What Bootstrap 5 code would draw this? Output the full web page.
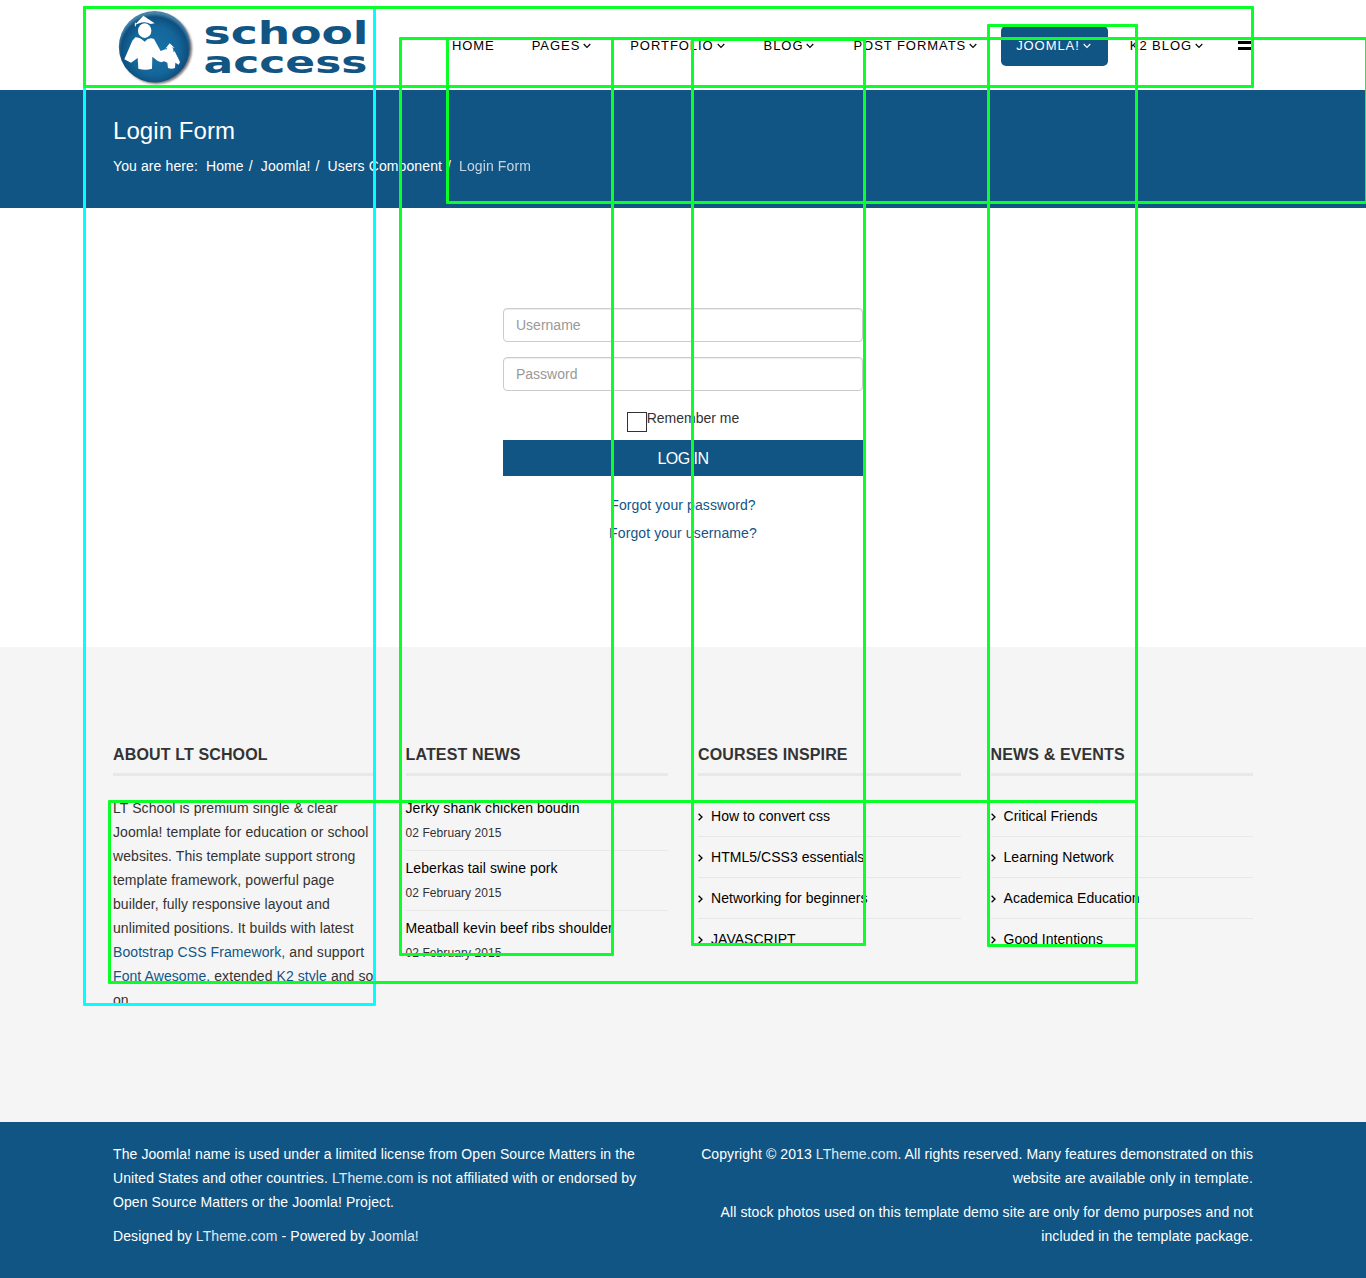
<!DOCTYPE html>
<html lang="en">
<head>
<meta charset="utf-8">
<meta name="viewport" content="width=device-width, initial-scale=1">
<title>Login Form</title>
<link href="https://cdn.jsdelivr.net/npm/bootstrap@5.3.0/dist/css/bootstrap.min.css" rel="stylesheet">
<style>
:root{--brand:#115585}
body{font:14px/24px "Liberation Sans",Arial,sans-serif;color:#333;background:#fff;overflow-x:hidden;position:relative}
a{text-decoration:none;color:var(--brand)}
.page-wrap{width:1170px;max-width:100%;margin:0 auto;padding:0 15px}
.site-head{height:90px}
.logo-svg{display:block;width:262px;height:90px}
.main-menu{gap:7px;margin-top:26px}
.main-menu .nav-link{font-size:13px;letter-spacing:.94px;line-height:40px;height:40px;padding:0 15px;color:#000;border-radius:5px;white-space:nowrap}
.main-menu .nav-link.active{background:var(--brand);color:#fff}
.main-menu svg{width:8px;height:6px;margin:0 2px 0 3px;vertical-align:1px;fill:none;stroke:currentColor;stroke-width:1.1}
.burger{width:14px;height:9px;margin:41px 1px 0 18px;border-top:3px solid #000;border-bottom:3px solid #000}
.title-band{height:118px;background:var(--brand);color:#fff}
.title-band h2{font-size:24px;line-height:26px;letter-spacing:.08px;margin:0;padding-top:28px;font-weight:400}
.crumbs{margin-top:10px;letter-spacing:.11px}
.crumbs a{color:#fff}
.sep{margin:0 8px 0 5px}
.login-area{height:439px;padding-top:100px}
.login-box{width:360px;margin:0 auto}
.login-box .form-control{height:34px;padding:6px 12px;font-size:14px;line-height:20px;border:1px solid #ccc;border-radius:4px;box-shadow:inset 0 1px 1px rgba(0,0,0,.075);margin-bottom:15px}
.login-box .form-control::placeholder{color:#999}
.tick{width:20px;height:20px;border:1px solid #333;margin-top:6px}
.btn-login{background:var(--brand);color:#fff;border:0;border-radius:0;height:36px;font-size:16px;line-height:24px;letter-spacing:-.5px;padding:7px 6px 5px;margin-top:8px}
.links{padding-top:15px;line-height:28px;letter-spacing:.11px}
.links a{display:block}
.bottom-area{background:#f5f5f5;height:475px;padding-top:94px;letter-spacing:.08px}
.bottom-area h3{font-size:16px;line-height:26px;font-weight:700;letter-spacing:.14px;margin:0 0 20px;padding:1px 0 5px;border-bottom:3px solid #e8e8e8;white-space:nowrap}
.cols{display:grid;grid-template-columns:repeat(4,minmax(0,1fr));column-gap:30px}
.news-item{height:60px;border-bottom:1px solid #e8e8e8;padding-top:5px}
.news-item:first-of-type{height:55px;padding-top:0}
.news-item:last-child{border:0}
.news-item a,.arrow-list a{color:#000}
.news-item span{font-size:12px;display:block;line-height:26px}
.arrow-list{list-style:none;margin:0;padding:0}
.arrow-list li{height:41px;line-height:40px;letter-spacing:.04px;border-bottom:1px solid #e8e8e8}
.arrow-list li:last-child{border:0}
.arrow-list svg{width:5px;height:8px;margin-right:8px;fill:none;stroke:#000;stroke-width:1.3;vertical-align:0}
.site-foot{background:var(--brand);color:#fff;height:156px;padding-top:20px;letter-spacing:.095px}
.site-foot p{margin:0 0 10px}
.site-foot a{color:#e0e9f0}
.region{position:absolute;border:3px solid #0aff28;border-radius:1px;pointer-events:none}
.r-cyan{left:83px;top:6px;width:293px;height:1000px;border-color:#0ff}
.r-head{left:83px;top:6px;width:1171px;height:82px}
.r-two{left:399px;top:37px;width:215px;height:919px}
.r-band{left:446px;top:37px;width:922px;height:167px}
.r-three{left:691px;top:38px;width:175px;height:908px}
.r-four{left:987px;top:24px;width:151px;height:923px}
.r-low{left:108px;top:800px;width:1030px;height:184px}
</style>
<script src="https://cdn.jsdelivr.net/npm/bootstrap@5.3.0/dist/js/bootstrap.bundle.min.js"></script>
</head>
<body>
<svg class="d-none"><symbol id="down" viewBox="0 0 8 6"><path d="M.7 1 4 4.4 7.3 1"/></symbol><symbol id="next" viewBox="0 0 5 8"><path d="M.6.7 4 4 .6 7.3"/></symbol></svg>
<header class="site-head">
<div class="page-wrap d-flex justify-content-between">
<a href="#" aria-label="school access"><svg class="logo-svg" viewBox="113 0 262 90">
<defs><radialGradient id="orb" cx=".5" cy=".55" r=".52"><stop offset="0" stop-color="#1773a6"/><stop offset=".65" stop-color="#14669a"/><stop offset=".9" stop-color="#0e4f7f"/><stop offset="1" stop-color="#4683a9"/></radialGradient><filter id="soft"><feGaussianBlur stdDeviation="1.2"/></filter></defs>
<circle cx="156.5" cy="48.5" r="35.5" fill="#4b4145" opacity=".75" filter="url(#soft)"/>
<circle cx="154.5" cy="46.8" r="35.7" fill="url(#orb)"/>
<g transform="translate(80 0) scale(.33333)" fill="#fff">
<path d="M190 47 224 70 212 72Q194 62 178 70L164 75Z"/><path d="M166 68v11" stroke="#fff" stroke-width="3"/>
<ellipse cx="194" cy="92" rx="20" ry="22"/>
<path d="M166 112Q180 112 194 125Q208 110 222 117L242 153 258 147 270 158 284 154 300 186 296 194 286 188 285 204Q275 208 264 204L262 188 252 184 244 187 233 183 217 170 216 206Q196 212 175 206L173 174 153 188 133 178 157 122Z"/>
<path d="M269 130 284 144 270 140 256 146Z"/><ellipse cx="270" cy="151" rx="10" ry="11"/>
</g>
<g font-family="DejaVu Sans" font-weight="700" fill="#115585"><text transform="translate(203.5 43.8)" font-size="32" textLength="165" lengthAdjust="spacingAndGlyphs">school</text><text transform="translate(203.5 72.5)" font-size="31" textLength="164" lengthAdjust="spacingAndGlyphs">access</text></g>
</svg></a>
<div class="d-flex">
<nav class="nav main-menu flex-nowrap">
<a class="nav-link" href="#">HOME</a>
<a class="nav-link" href="#">PAGES<svg><use href="#down"/></svg></a>
<a class="nav-link" href="#">PORTFOLIO<svg><use href="#down"/></svg></a>
<a class="nav-link" href="#">BLOG<svg><use href="#down"/></svg></a>
<a class="nav-link" href="#">POST FORMATS<svg><use href="#down"/></svg></a>
<a class="nav-link active" href="#">JOOMLA!<svg><use href="#down"/></svg></a>
<a class="nav-link" href="#">K2 BLOG<svg><use href="#down"/></svg></a>
</nav>
<div class="burger"></div>
</div>
</div>
</header>
<section class="title-band"><div class="page-wrap">
<h2>Login Form</h2>
<div class="crumbs d-flex"><span class="me-2">You are here:</span><a href="#">Home</a><span class="sep">/</span><a href="#">Joomla!</a><span class="sep">/</span><a href="#">Users Component</a><span class="sep">/</span><span class="opacity-75">Login Form</span></div>
</div></section>
<main class="login-area">
<form class="login-box">
<input class="form-control" type="text" placeholder="Username">
<input class="form-control" type="password" placeholder="Password">
<div class="d-flex justify-content-center"><span class="tick"></span><span>Remember me</span></div>
<button class="btn btn-login w-100 d-block" type="button">LOG IN</button>
<div class="text-center links"><a href="#">Forgot your password?</a><a href="#">Forgot your username?</a></div>
</form>
</main>
<section class="bottom-area"><div class="page-wrap cols">
<div><h3>ABOUT LT SCHOOL</h3>
<div>LT School is premium single &amp; clear<br>Joomla! template for education or school<br>websites. This template support strong<br>template framework, powerful page<br>builder, fully responsive layout and<br>unlimited positions. It builds with latest<br><a href="#">Bootstrap CSS Framework,</a> and support<br><span class="text-nowrap"><a href="#">Font Awesome,</a> extended <a href="#">K2 style</a> and so</span><br>on.</div></div>
<div><h3>LATEST NEWS</h3>
<div class="news-item"><a href="#">Jerky shank chicken boudin</a><span>02 February 2015</span></div>
<div class="news-item"><a href="#">Leberkas tail swine pork</a><span>02 February 2015</span></div>
<div class="news-item"><a href="#">Meatball kevin beef ribs shoulder</a><span>02 February 2015</span></div></div>
<div><h3>COURSES INSPIRE</h3>
<ul class="arrow-list"><li><a href="#"><svg><use href="#next"/></svg>How to convert css</a></li><li><a href="#"><svg><use href="#next"/></svg>HTML5/CSS3 essentials</a></li><li><a href="#"><svg><use href="#next"/></svg>Networking for beginners</a></li><li><a href="#"><svg><use href="#next"/></svg>JAVASCRIPT</a></li></ul></div>
<div><h3>NEWS &amp; EVENTS</h3>
<ul class="arrow-list"><li><a href="#"><svg><use href="#next"/></svg>Critical Friends</a></li><li><a href="#"><svg><use href="#next"/></svg>Learning Network</a></li><li><a href="#"><svg><use href="#next"/></svg>Academica Education</a></li><li><a href="#"><svg><use href="#next"/></svg>Good Intentions</a></li></ul></div>
</div></section>
<footer class="site-foot"><div class="page-wrap d-flex justify-content-between text-nowrap">
<div><p>The Joomla! name is used under a limited license from Open Source Matters in the<br>United States and other countries. <a href="#">LTheme.com</a> is not affiliated with or endorsed by<br>Open Source Matters or the Joomla! Project.</p><p>Designed by <a href="#">LTheme.com</a> - Powered by <a href="#">Joomla!</a></p></div>
<div class="text-end"><p>Copyright © 2013 <a href="#">LTheme.com</a>. All rights reserved. Many features demonstrated on this<br>website are available only in template.</p><p>All stock photos used on this template demo site are only for demo purposes and not<br>included in the template package.</p></div>
</div></footer>
<div class="region r-cyan"></div><div class="region r-head"></div><div class="region r-two"></div><div class="region r-band"></div><div class="region r-three"></div><div class="region r-four"></div><div class="region r-low"></div>
</body>
</html>
